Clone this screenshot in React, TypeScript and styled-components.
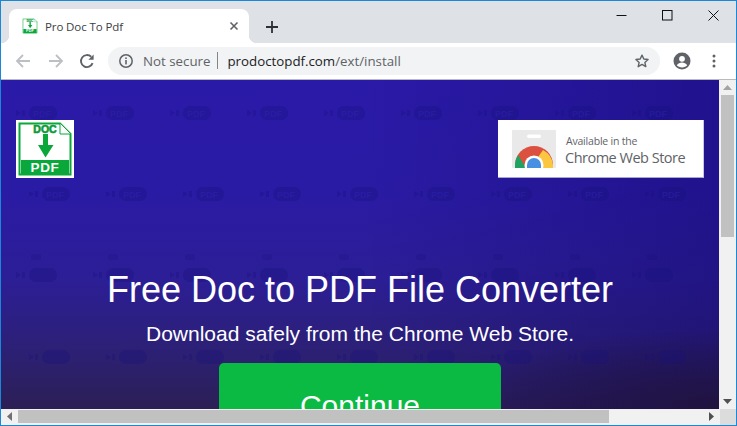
import React from "react";
import styled, { createGlobalStyle } from "styled-components";

const Global = createGlobalStyle`
  html, body { margin: 0; padding: 0; background: #fff; overflow: hidden; }
  #root { width: 737px; height: 426px; }
  * { box-sizing: border-box; }
`;

const Win = styled.div`
  width: 737px; height: 426px; border: 1px solid #1a88d8;
  display: flex; flex-direction: column; background: #fff; overflow: hidden;
  font-family: "Open Sans", "Noto Sans", sans-serif;
`;
const TabStrip = styled.div`
  height: 42px; flex: none; background: #dee1e6; display: flex; align-items: flex-end; padding-left: 8px; position: relative;
`;
const Tab = styled.div`
  width: 240px; height: 34px; background: #fff; border-radius: 8px 8px 0 0; display: flex; align-items: center;
  padding: 0 9px 0 13px; position: relative;
  &::before, &::after { content: ""; position: absolute; bottom: 0; width: 8px; height: 8px; }
  &::before { left: -8px; background: radial-gradient(circle at 0 0, transparent 8px, #fff 8.5px); }
  &::after { right: -8px; background: radial-gradient(circle at 100% 0, transparent 8px, #fff 8.5px); }
`;
const TabTitle = styled.span`
  font-size: 11.5px; color: #3c4043; margin-left: 7px; flex: 1; white-space: nowrap;
  font-family: "Open Sans", sans-serif; letter-spacing: -0.1px;
`;
const NewTab = styled.div`
  width: 24px; height: 24px; margin: 0 0 4px 11px; display: flex; align-items: center; justify-content: center;
`;
const WinControls = styled.div`
  position: absolute; top: 0; right: 0; display: flex;
`;
const WinBtn = styled.div`
  width: 46px; height: 29px; display: flex; align-items: center; justify-content: center;
`;
const Toolbar = styled.div`
  height: 37px; flex: none; background: #fff; border-bottom: 1px solid #b9babc; display: flex; align-items: center;
  padding: 0 0 1px 0;
`;
const NavBtn = styled.div<{ $w: number; $lead?: number }>`
  width: ${p => p.$w}px; height: 28px; flex: none; display: flex; align-items: center; justify-content: center;
  margin-left: ${p => p.$lead ?? 0}px;
`;
const Omni = styled.div`
  width: 552px; height: 28px; margin-left: 6px; border-radius: 14px; background: #f1f3f4; display: flex; align-items: center; padding: 0 10px;
`;
const Secure = styled.span`
  font-size: 13.3px; color: #5f6368; margin-left: 9px; white-space: nowrap;
`;
const Sep = styled.span`
  width: 1px; height: 17px; background: #80868b; margin: 0 9px 0 7px; flex: none;
`;
const Host = styled.span`
  font-size: 13.3px; color: #202124; white-space: nowrap;
`;
const Path = styled.span`
  font-size: 13.3px; color: #5f6368; white-space: nowrap; flex: 1;
`;
const Middle = styled.div`
  flex: 1; min-height: 0; display: flex;
`;
const Viewport = styled.div`
  flex: 1; min-width: 0; overflow: hidden; position: relative;
  background:
    radial-gradient(ellipse 260px 80px at 718px 328px, #20133f 0%, rgba(32,19,63,0) 100%),
    linear-gradient(90deg, rgba(20,8,110,0) 50%, rgba(20,8,110,.45) 100%),
    linear-gradient(180deg, #2a1aa8 0%, #2a1ba4 35%, #2c1e96 60%, #2c2076 82%, #2c1f55 100%);
`;
const Marks = styled.svg`
  position: absolute; left: 0; top: 0; pointer-events: none;
`;
const MarkText = styled.text`
  font-family: "Liberation Sans", sans-serif; font-size: 9px; font-weight: 700;
`;
const Header = styled.div`
  position: relative; display: flex; justify-content: space-between; align-items: flex-start; padding: 40px 15px 0 15px;
`;
const Logo = styled.div`
  width: 58px; height: 58px; background: #fff; flex: none; display: flex; align-items: center; justify-content: center;
`;
const Badge = styled.div`
  width: 206px; height: 58px; background: #fff; border-bottom: 1px solid #a8a5d8; border-right: 1px solid #c8c6ea; display: flex; align-items: flex-start; padding: 10px 0 0 14px; flex: none;
`;
const BadgeText = styled.div`
  margin-left: 10px; display: flex; flex-direction: column; color: #5f6368; font-family: "Open Sans", sans-serif; padding-top: 4px;
`;
const BadgeSmall = styled.span`
  font-size: 10.5px; line-height: 14px; white-space: nowrap; letter-spacing: -0.2px;
`;
const BadgeBig = styled.span`
  font-size: 14.5px; line-height: 19px; white-space: nowrap; letter-spacing: -0.5px; margin-left: -1px;
`;
const Hero = styled.div`
  position: relative; display: flex; flex-direction: column; align-items: center; color: #fff; font-family: "Liberation Sans", Arial, sans-serif; padding-top: 88px;
`;
const Title = styled.h1`
  margin: 0; font-size: 36px; line-height: 48px; font-weight: 400; white-space: nowrap;
`;
const Sub = styled.p`
  margin: 6px 0 0; font-size: 21px; line-height: 28px; white-space: nowrap;
`;
const Cta = styled.div`
  margin-top: 15px; width: 282px; height: 90px; flex: none; background: #0bba42; border-radius: 5px; color: #fff; font-size: 30px; text-align: center; padding-top: 25px; line-height: 36px;
`;
const VBar = styled.div`
  width: 17px; flex: none; background: #f1f1f1; display: flex; flex-direction: column; align-items: center;
`;
const VBtn = styled.div`
  height: 15px; width: 17px; flex: none; display: flex; align-items: center; justify-content: center;
`;
const VThumb = styled.div`
  width: 13px; height: 142px; background: #c1c1c1; flex: none;
`;
const VSpace = styled.div`flex: 1;`;
const HBar = styled.div`
  height: 16px; flex: none; background: #f1f1f1; display: flex; align-items: center; border-bottom: 1px solid #f1f1f1;
`;
const HBtn = styled.div`
  width: 17px; height: 15px; flex: none; display: flex; align-items: center; justify-content: center;
`;
const HThumb = styled.div`
  width: 591px; height: 13px; background: #c1c1c1; flex: none;
`;
const HSpace = styled.div`flex: 1;`;
const Corner = styled.div`
  width: 16px; height: 16px; background: #dcdcdc; flex: none;
`;

const DocIcon = ({ size }: { size: number }) => (
  <svg width={size} height={size} viewBox="0 0 58 58">
    <rect width="58" height="58" fill="#fff" />
    <path d="M3.5 3.5H44L54.5 14V54.5H3.5Z" fill="#fff" stroke="#0ba83a" strokeWidth="2" />
    <path d="M44 3L55 14H44Z" fill="#fff" stroke="#0ba83a" strokeWidth="1" />
    <text x="29" y="13" fontSize="10.5" fontWeight="700" fill="#0a9a36" textAnchor="middle" fontFamily="Liberation Sans, sans-serif" stroke="#0a9a36" strokeWidth=".6">DOC</text>
    <path d="M27 14h5v11h5.500L29.500 37.500 22 25h5Z" fill="#0aa83a" />
    <rect x="5" y="40" width="48" height="15" fill="#0aa83a" />
    <text x="29" y="52" fontSize="13.5" fontWeight="700" fill="#fff" textAnchor="middle" fontFamily="Liberation Sans, sans-serif" letterSpacing=".6">PDF</text>
  </svg>
);

const rows = [
  { y: 33, x: 15, label: true }, { y: 114, x: 28, label: true }, { y: 195, x: 15, label: false }, { y: 277, x: 28, label: false },
];
const cols = [0, 1, 2, 3, 4, 5, 6, 7, 8];
const smallRow = [30, 107, 184, 261, 338, 415, 492, 569, 646];

const Watermarks = () => (
  <Marks width="719" height="328" viewBox="0 0 719 328">
    {rows.map((r, i) =>
      cols.map(c => (
        <g key={`${i}-${c}`} transform={`translate(${r.x + c * 77} ${r.y})`}>
          <g fill="#17107a" fillOpacity={0.3}>
            <path d="M0 -3l5 3l-5 3zM6 -3h3v6h-3z" />
            <rect x="13" y="-7" width="28" height="14" rx="7" />
          </g>
          {r.label && <MarkText x="26" y="3.5" textAnchor="middle" fill="#3a2cc0" fillOpacity={0.3}>PDF</MarkText>}
        </g>
      ))
    )}
    {smallRow.map(x => (
      <rect key={x} x={x} y={174} width="10" height="6" rx="3" fill="#17107a" fillOpacity={0.25} />
    ))}
  </Marks>
);

export default function App() {
  return (
    <Win>
      <Global />
      <TabStrip>
        <Tab>
          <DocIcon size={16} />
          <TabTitle>Pro Doc To Pdf</TabTitle>
          <svg width="12" height="12" viewBox="0 0 12 12"><path d="M2.5 2.5l7 7M9.5 2.5l-7 7" stroke="#5f6368" strokeWidth="1.6" /></svg>
        </Tab>
        <NewTab>
          <svg width="14" height="14" viewBox="0 0 14 14"><path d="M7 1v12M1 7h12" stroke="#2f3033" strokeWidth="1.8" /></svg>
        </NewTab>
        <WinControls>
          <WinBtn><svg width="11" height="11" viewBox="0 0 11 11"><path d="M0.5 5.5h10" stroke="#111" strokeWidth="1" /></svg></WinBtn>
          <WinBtn><svg width="11" height="11" viewBox="0 0 11 11"><rect x=".5" y=".5" width="9.5" height="9.5" fill="none" stroke="#111" /></svg></WinBtn>
          <WinBtn><svg width="11" height="11" viewBox="0 0 11 11"><path d="M.5.5l10 10M10.5.5l-10 10" stroke="#111" strokeWidth="1" /></svg></WinBtn>
        </WinControls>
      </TabStrip>
      <Toolbar>
        <NavBtn $w={34} $lead={5}>
          <svg width="16" height="16" viewBox="0 0 16 16"><path d="M15 8H2M8 2L2 8l6 6" fill="none" stroke="#bcbfc3" strokeWidth="1.8" /></svg>
        </NavBtn>
        <NavBtn $w={32}>
          <svg width="16" height="16" viewBox="0 0 16 16"><path d="M1 8h13M8 2l6 6-6 6" fill="none" stroke="#bcbfc3" strokeWidth="1.8" /></svg>
        </NavBtn>
        <NavBtn $w={30}>
          <svg width="16" height="16" viewBox="0 0 16 16"><path d="M13.6 10.2A6 6 0 1 1 12.2 3.8" fill="none" stroke="#5f6368" strokeWidth="1.9" /><path d="M14.6 1.6v5.2H9.4Z" fill="#5f6368" /></svg>
        </NavBtn>
        <Omni>
          <svg width="16" height="16" viewBox="0 0 16 16" style={{ flex: "none" }}><circle cx="8" cy="8" r="6.2" fill="none" stroke="#5f6368" strokeWidth="1.5" /><rect x="7.2" y="7" width="1.6" height="4.4" fill="#5f6368" /><rect x="7.2" y="4.4" width="1.6" height="1.6" fill="#5f6368" /></svg>
          <Secure>Not secure</Secure>
          <Sep />
          <Host>prodoctopdf.com</Host>
          <Path>/ext/install</Path>
          <svg width="16" height="16" viewBox="0 0 24 24" style={{ flex: "none" }}><path d="M12 3.2l2.7 5.9 6.4.7-4.8 4.3 1.4 6.4L12 17.2l-5.7 3.3 1.4-6.4-4.8-4.3 6.4-.7Z" fill="none" stroke="#5f6368" strokeWidth="2.1" strokeLinejoin="round" /></svg>
        </Omni>
        <NavBtn $w={44}>
          <svg width="18" height="18" viewBox="0 0 18 18"><circle cx="9" cy="9" r="8.5" fill="#5f6368" /><circle cx="9" cy="6.8" r="2.9" fill="#fff" /><path d="M3.8 13.2c1.2-2 3.2-2.8 5.2-2.8s4 .8 5.2 2.8c-1.3 1.4-3.1 2.2-5.2 2.2s-3.9-.8-5.2-2.2Z" fill="#fff" /></svg>
        </NavBtn>
        <NavBtn $w={20}>
          <svg width="4" height="14" viewBox="0 0 4 14"><circle cx="2" cy="2" r="1.5" fill="#5f6368" /><circle cx="2" cy="7" r="1.5" fill="#5f6368" /><circle cx="2" cy="12" r="1.5" fill="#5f6368" /></svg>
        </NavBtn>
      </Toolbar>
      <Middle>
        <Viewport>
          <Watermarks />
          <Header>
            <Logo><DocIcon size={58} /></Logo>
            <Badge>
              <svg width="44" height="38" viewBox="0 0 44 38" style={{ flex: "none" }}>
                <rect width="44" height="38" rx="1" fill="#e8e9e8" />
                <rect x="15" y="4.5" width="14" height="3.5" rx="1.7" fill="#fff" />
                <path d="M3 38V35a19 19 0 0 1 38 0v3Z" fill="#dc5040" />
                <path d="M31 20a19 19 0 0 1 10 15v3H30L24 30Z" fill="#fbc640" />
                <path d="M3 38V35a19 19 0 0 1 3-10l8 13Z" fill="#1ea362" />
                <circle cx="22" cy="35" r="9.5" fill="#fff" />
                <path d="M15 38v-3a7 7 0 0 1 14 0v3Z" fill="#4a90e2" />
              </svg>
              <BadgeText>
                <BadgeSmall>Available in the</BadgeSmall>
                <BadgeBig>Chrome Web Store</BadgeBig>
              </BadgeText>
            </Badge>
          </Header>
          <Hero>
            <Title>Free Doc to PDF File Converter</Title>
            <Sub>Download safely from the Chrome Web Store.</Sub>
            <Cta>Continue</Cta>
          </Hero>
        </Viewport>
        <VBar>
          <VBtn><svg width="9" height="5" viewBox="0 0 9 5"><path d="M4.5 0L9 5H0Z" fill="#a3a3a3" /></svg></VBtn>
          <VThumb />
          <VSpace />
          <VBtn><svg width="9" height="5" viewBox="0 0 9 5"><path d="M0 0h9L4.5 5Z" fill="#505050" /></svg></VBtn>
        </VBar>
      </Middle>
      <HBar>
        <HBtn><svg width="5" height="9" viewBox="0 0 5 9"><path d="M5 0v9L0 4.5Z" fill="#707070" /></svg></HBtn>
        <HThumb />
        <HSpace />
        <HBtn><svg width="5" height="9" viewBox="0 0 5 9"><path d="M0 0v9l5-4.5Z" fill="#505050" /></svg></HBtn>
        <Corner />
      </HBar>
    </Win>
  );
}
